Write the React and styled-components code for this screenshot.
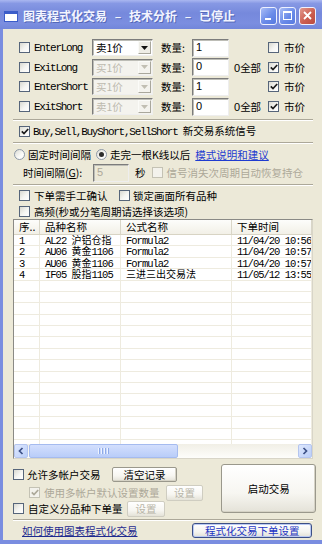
import React from "react";
import styled, { createGlobalStyle } from "styled-components";

const CJK = `"Noto Sans CJK SC", "Noto Sans", sans-serif`;
const MONO = `"Liberation Mono", "DejaVu Sans Mono", monospace`;
const SANS = `"Liberation Sans", Arial, sans-serif`;

const FRAME = "#7a8de0";
const FACE = "#ece9d8";
const DIS = "#aca899";

const Global = createGlobalStyle`
  * { box-sizing: border-box; }
  html, body { margin: 0; padding: 0; width: 322px; height: 544px; overflow: hidden; background: ${FRAME}; }
  #root { width: 322px; height: 544px; }
`;

const Window = styled.div`
  width: 322px;
  height: 544px;
  display: flex;
  flex-direction: column;
  background: ${FRAME};
  font-family: ${CJK};
  font-size: 10.5px;
  color: #000;
`;

const TitleBar = styled.div`
  flex: none;
  height: 29px;
  display: flex;
  align-items: flex-start;
  padding: 0 6px 0 4px;
  background: linear-gradient(to bottom, #aab7f0 0%, #8698e4 12%, #7689dc 45%, #7b8ee0 80%, #7286da 100%);
`;

const WinIcon = styled.svg`
  flex: none;
  margin-top: 11px;
`;

const TitleText = styled.div`
  margin-left: 5px;
  margin-top: 7px;
  font-family: ${CJK};
  font-weight: 700;
  font-size: 12px;
  line-height: 17px;
  color: #f3f5ff;
  white-space: nowrap;
  text-shadow: 1px 1px 0 #5468b8;
`;

const Dash = styled.span`
  display: inline-block;
  width: 22px;
  text-align: center;
`;

const Caption = styled.div`
  margin-left: auto;
  margin-top: 7px;
  display: flex;
  gap: 2px;
`;

const CapBtn = styled.div`
  width: 17px;
  height: 18px;
  margin-left: ${(p) => (p.$close ? "1px" : "0")};
  border: 1px solid #eef1ff;
  border-radius: 3px;
  background: ${(p) =>
    p.$close
      ? "linear-gradient(135deg, #e29a8f, #cc5e50 55%, #b94b3f)"
      : "linear-gradient(135deg, #a9bdf6, #6a8be9 55%, #5679e0)"};
  display: flex;
  align-items: center;
  justify-content: center;
`;

const Frame = styled.div`
  flex: 1;
  display: flex;
  padding: 0 4px 4px 3px;
`;

const Body = styled.div`
  flex: 1;
  background: ${FACE};
  display: flex;
  flex-direction: column;
  padding: 9px 9px 2px 10px;
  & > * {
    flex: none;
  }
`;

const Mono = styled.span`
  font-family: ${MONO};
  font-size: 11px;
  letter-spacing: -1.25px;
`;

const Label = styled.span`
  font-family: ${CJK};
  font-size: 10.5px;
  line-height: 13px;
  white-space: nowrap;
  color: ${(p) => (p.$disabled ? DIS : "#000")};
  margin-left: ${(p) => p.$ml || 0}px;
`;

const LinkText = styled.span`
  font-family: ${CJK};
  font-size: 10.5px;
  line-height: 13px;
  white-space: nowrap;
  color: ${(p) => p.$color || "#1f3bd0"};
  text-decoration: underline;
  margin-left: ${(p) => p.$ml || 0}px;
`;

/* ---------- checkbox / radio ---------- */
const Box = styled.span`
  flex: none;
  width: 11px;
  height: 11px;
  margin-left: ${(p) => p.$ml || 0}px;
  border: 1px solid ${(p) => (p.$disabled ? "#c4c2b4" : "#56657a")};
  background: ${(p) =>
    p.$disabled ? "#f3f2ec" : "linear-gradient(135deg, #d9d9d1 0%, #f6f6f3 55%, #ffffff 100%)"};
  display: inline-flex;
  align-items: center;
  justify-content: center;
`;

function Check({ checked, disabled, ml }) {
  return (
    <Box $disabled={disabled} $ml={ml}>
      {checked && (
        <svg width="8" height="7" viewBox="0 0 8 7">
          <polyline
            points="0.8,3.3 3,5.6 7.2,1"
            fill="none"
            stroke={disabled ? DIS : "#1c1c1c"}
            strokeWidth="1.7"
          />
        </svg>
      )}
    </Box>
  );
}

const RadioBox = styled.span`
  flex: none;
  width: 11px;
  height: 11px;
  border-radius: 50%;
  margin-left: ${(p) => p.$ml || 0}px;
  border: 1px solid #8e99a8;
  background: linear-gradient(135deg, #dcdcd4 0%, #fafaf8 60%, #fff 100%);
  display: inline-flex;
  align-items: center;
  justify-content: center;
  &::after {
    content: "";
    width: 5px;
    height: 5px;
    border-radius: 50%;
    background: ${(p) => (p.$on ? "#2d2d2d" : "transparent")};
  }
`;

/* ---------- inputs ---------- */
const TextBox = styled.div`
  flex: none;
  width: ${(p) => p.$w}px;
  height: 18px;
  border: 1px solid;
  border-color: #7c7c7c #eeeeee #eeeeee #7c7c7c;
  box-shadow: inset 1px 1px 0 #bdbdb6;
  background: ${(p) => (p.$disabled ? FACE : "#fff")};
  font-family: ${SANS};
  font-size: 11px;
  line-height: 13px;
  padding: 1px 0 0 3px;
  color: ${(p) => (p.$disabled ? DIS : "#000")};
`;

const SelectBox = styled.div`
  flex: none;
  width: 61px;
  height: 17px;
  display: flex;
  border: 1px solid;
  border-color: #7c7c7c #eeeeee #eeeeee #7c7c7c;
  box-shadow: inset 1px 1px 0 #bdbdb6;
  background: ${(p) => (p.$disabled ? "#f4f3ee" : "#fff")};
`;

const SelText = styled.span`
  flex: 1;
  padding: 1px 0 0 3px;
  font-family: ${CJK};
  font-size: 10.5px;
  line-height: 13px;
  color: ${(p) => (p.$disabled ? "#bdbaae" : "#000")};
`;

const SelBtn = styled.span`
  width: 13px;
  margin: 1px 1px 1px 0;
  border: 1px solid;
  border-color: #fbfbf8 #a9a79c #a9a79c #fbfbf8;
  background: ${(p) => (p.$disabled ? "#f4f3ee" : "#eeede6")};
  display: flex;
  align-items: center;
  justify-content: center;
`;

function Select({ value, disabled }) {
  return (
    <SelectBox $disabled={disabled}>
      <SelText $disabled={disabled}>{value}</SelText>
      <SelBtn $disabled={disabled}>
        <svg width="7" height="4" viewBox="0 0 7 4">
          <polygon points="0,0 7,0 3.5,4" fill={disabled ? "#c2bfb3" : "#111"} />
        </svg>
      </SelBtn>
    </SelectBox>
  );
}

/* ---------- buttons ---------- */
const Button = styled.div`
  flex: none;
  width: ${(p) => p.$w}px;
  height: ${(p) => p.$h}px;
  margin-left: ${(p) => p.$ml || 0}px;
  display: flex;
  align-items: center;
  justify-content: center;
  border: 1px solid ${(p) => (p.$disabled ? "#cfcdc1" : "#9a988c")};
  border-radius: 2px;
  background: linear-gradient(to bottom, #ffffff 0%, #f7f6f1 60%, #e4e2d8 100%);
  box-shadow: ${(p) => (p.$disabled ? "none" : "inset -1px -1px 0 #d6d3c6")};
  font-family: ${CJK};
  font-size: 10.5px;
  white-space: nowrap;
  color: ${(p) => (p.$disabled ? "#b8b5a8" : "#000")};
`;

const DefaultButton = styled.div`
  flex: none;
  width: 120px;
  height: 15px;
  display: flex;
  align-items: center;
  justify-content: center;
  border: 1px solid #3c4f86;
  border-radius: 3px;
  background: linear-gradient(to bottom, #ffffff 0%, #f4f4f0 60%, #e2e0d6 100%);
  box-shadow: inset 0 0 0 1px #b9c9f3;
  font-family: ${CJK};
  font-size: 10.5px;
  white-space: nowrap;
  color: #1d36c4;
`;

/* ---------- layout rows ---------- */
const OrderRow = styled.div`
  height: 19.6px;
  display: flex;
  align-items: center;
`;

const CheckCell = styled.div`
  flex: none;
  width: 79px;
  padding-left: 6px;
  display: flex;
  align-items: center;
`;

const QtyLabel = styled.span`
  flex: none;
  width: 31px;
  margin-left: 8px;
  font-family: ${CJK};
  font-size: 10.5px;
`;

const AllCell = styled.span`
  flex: none;
  width: 39px;
  padding-left: 5px;
  font-family: ${CJK};
  font-size: 10.5px;
  white-space: nowrap;
`;

const Zero = styled.span`
  font-family: ${SANS};
  font-size: 11px;
`;

const Sep = styled.div`
  height: 2px;
  margin-top: ${(p) => p.$mt || 0}px;
  border-top: 1px solid #aca899;
  border-bottom: 1px solid #ffffff;
`;

const Row = styled.div`
  height: ${(p) => p.$h}px;
  margin-top: ${(p) => p.$mt || 0}px;
  padding-left: ${(p) => p.$pl || 0}px;
  display: flex;
  align-items: center;
`;

const TimeLabel = styled.span`
  flex: none;
  width: 70px;
  font-family: ${CJK};
  font-size: 10.5px;
  white-space: nowrap;
`;

/* ---------- table ---------- */
const COLS = "26px 81px 111px 1fr";

const Table = styled.div`
  height: 240px;
  display: flex;
  flex-direction: column;
  border: 1px solid;
  border-color: #8a8a86 #d8d5c8 #d8d5c8 #8a8a86;
  background: #fff;
  overflow: hidden;
`;

const HeadRow = styled.div`
  flex: none;
  height: 15px;
  display: grid;
  grid-template-columns: ${COLS};
  background: linear-gradient(to bottom, #fdfdfb, #f2f0e7);
  border-bottom: 1px solid #d8d4c4;
`;

const HeadCell = styled.div`
  padding-left: 5px;
  border-right: 1px solid #d9d6c8;
  font-family: ${CJK};
  font-size: 10.5px;
  line-height: 14px;
  white-space: nowrap;
  overflow: hidden;
`;

const Rows = styled.div`
  flex: 1;
  overflow: hidden;
`;

const DataRow = styled.div`
  height: 11.4px;
  display: grid;
  grid-template-columns: ${COLS};
  border-bottom: 1px solid #eeebdf;
`;

const Cell = styled.div`
  padding-left: 5px;
  border-right: 1px solid #eeebdf;
  font-family: ${CJK};
  font-size: 10px;
  line-height: 10.4px;
  white-space: nowrap;
  overflow-x: clip;
  overflow-y: visible;
  & ${Mono} {
    font-size: 10.5px;
    letter-spacing: -1px;
  }
`;

const HScroll = styled.div`
  flex: none;
  height: 14px;
  display: flex;
  background: linear-gradient(to bottom, #f1efe6, #fdfdfb);
`;

const ScrollBtn = styled.div`
  flex: none;
  width: 14px;
  height: 14px;
  border: 1px solid #b4c5ef;
  border-radius: 2px;
  background: linear-gradient(135deg, #dde7fd, #bccff9);
  display: flex;
  align-items: center;
  justify-content: center;
  margin-left: ${(p) => (p.$right ? "auto" : "0")};
`;

const Thumb = styled.div`
  flex: none;
  width: 149px;
  margin-left: 1px;
  border: 1px solid #a5bbef;
  border-radius: 2px;
  background: linear-gradient(to bottom, #d3dffd, #b9cdf9);
  display: flex;
  align-items: center;
  justify-content: center;
  gap: 1px;
`;

const Grip = styled.span`
  width: 1px;
  height: 6px;
  background: #eef3fe;
  box-shadow: 1px 0 0 #8eaae8;
  margin-right: 1px;
`;

/* ---------- bottom ---------- */
const Bottom = styled.div`
  margin-top: 5px;
  margin-right: -3px;
  height: 53px;
  display: flex;
`;

const BottomLeft = styled.div`
  flex: 1;
  display: flex;
  flex-direction: column;
`;

const BigButton = styled(Button)`
  border-radius: 3px;
`;

const FootRow = styled.div`
  margin-top: 2px;
  height: 15px;
  padding: 0 1px 0 9px;
  display: flex;
  align-items: center;
  justify-content: space-between;
`;

function Mixed({ text }) {
  const parts = text.match(/[\x20-\x7e]+|[^\x20-\x7e]+/g) || [];
  return parts.map((s, i) =>
    /^[\x20-\x7e]+$/.test(s) ? <Mono key={i}>{s}</Mono> : <span key={i}>{s}</span>
  );
}

const orders = [
  { name: "EnterLong", price: "卖1价", enabled: true, qty: "1", all: false, market: false },
  { name: "ExitLong", price: "买1价", enabled: false, qty: "0", all: true, market: true },
  { name: "EnterShort", price: "买1价", enabled: false, qty: "1", all: false, market: true },
  { name: "ExitShort", price: "卖1价", enabled: false, qty: "0", all: true, market: true },
];

const records = [
  ["1", "AL22 沪铝仓指", "Formula2", "11/04/20 10:56"],
  ["2", "AU06 黄金1106", "Formula2", "11/04/20 10:57"],
  ["3", "AU06 黄金1106", "Formula2", "11/04/20 10:57"],
  ["4", "IF05 股指1105", "三进三出交易法", "11/05/12 13:55"],
];

export default function App() {
  const empty = Array.from({ length: 16 });
  return (
    <>
      <Global />
      <Window>
        <TitleBar>
          <WinIcon width="14" height="11" viewBox="0 0 14 11">
            <rect x="0.5" y="0.5" width="13" height="10" fill="#fff" stroke="#3b5cc9" />
            <rect x="0" y="0" width="14" height="3" fill="#3b5cc9" />
          </WinIcon>
          <TitleText>
            图表程式化交易<Dash>–</Dash>技术分析<Dash>–</Dash>已停止
          </TitleText>
          <Caption>
            <CapBtn>
              <svg width="15" height="16" viewBox="0 0 15 16">
                <rect x="4" y="10" width="6" height="2" fill="#fff" />
              </svg>
            </CapBtn>
            <CapBtn>
              <svg width="15" height="16" viewBox="0 0 15 16">
                <rect x="3.5" y="3.5" width="8" height="8" fill="none" stroke="#fff" />
                <rect x="3" y="3" width="9" height="2" fill="#fff" />
              </svg>
            </CapBtn>
            <CapBtn $close>
              <svg width="15" height="16" viewBox="0 0 15 16">
                <path d="M4 4 L11 11 M11 4 L4 11" stroke="#fff" strokeWidth="1.8" />
              </svg>
            </CapBtn>
          </Caption>
        </TitleBar>
        <Frame>
          <Body>
            {orders.map((o) => (
              <OrderRow key={o.name}>
                <CheckCell>
                  <Check />
                  <Label $ml={4}>
                    <Mono>{o.name}</Mono>
                  </Label>
                </CheckCell>
                <Select value={o.price} disabled={!o.enabled} />
                <QtyLabel>数量:</QtyLabel>
                <TextBox $w={37}>{o.qty}</TextBox>
                <AllCell>
                  {o.all && (
                    <>
                      <Zero>0</Zero>全部
                    </>
                  )}
                </AllCell>
                <Check checked={o.market} />
                <Label $ml={5}>市价</Label>
              </OrderRow>
            ))}

            <Sep $mt={2.6} />
            <Row $h={21} $pl={6}>
              <Check checked />
              <Label $ml={3}>
                <Mono>Buy,Sell,BuyShort,SellShort </Mono>新交易系统信号
              </Label>
            </Row>
            <Sep />

            <Row $h={18} $mt={2} $pl={1}>
              <RadioBox />
              <Label $ml={3}>固定时间间隔</Label>
              <RadioBox $on $ml={5} />
              <Label $ml={3}>走完一根K线以后</Label>
              <LinkText $ml={5}>模式说明和建议</LinkText>
            </Row>
            <Row $h={18} $pl={10}>
              <TimeLabel>
                时间间隔(<u>G</u>):
              </TimeLabel>
              <TextBox $w={36} $disabled>
                5
              </TextBox>
              <Label $ml={6}>秒</Label>
              <Check disabled ml={6} />
              <Label $ml={4} $disabled>
                信号消失次周期自动恢复持仓
              </Label>
            </Row>
            <Sep $mt={2} />

            <Row $h={16} $mt={2} $pl={6}>
              <Check />
              <Label $ml={4}>下单需手工确认</Label>
              <Check ml={11.5} />
              <Label $ml={3}>锁定画面所有品种</Label>
            </Row>
            <Row $h={15} $pl={6}>
              <Check />
              <Label $ml={4}>高频(秒或分笔周期请选择该选项)</Label>
            </Row>

            <Table>
              <HeadRow>
                <HeadCell>序..</HeadCell>
                <HeadCell>品种名称</HeadCell>
                <HeadCell>公式名称</HeadCell>
                <HeadCell>下单时间</HeadCell>
              </HeadRow>
              <Rows>
                {records.map((r) => (
                  <DataRow key={r[0]}>
                    {r.map((c, i) => (
                      <Cell key={i}>
                        <Mixed text={c} />
                      </Cell>
                    ))}
                  </DataRow>
                ))}
                {empty.map((_, i) => (
                  <DataRow key={"e" + i}>
                    <Cell />
                    <Cell />
                    <Cell />
                    <Cell />
                  </DataRow>
                ))}
              </Rows>
              <HScroll>
                <ScrollBtn>
                  <svg width="8" height="8" viewBox="0 0 8 8">
                    <polyline points="5.5,1 2.5,4 5.5,7" fill="none" stroke="#3d5187" strokeWidth="1.7" />
                  </svg>
                </ScrollBtn>
                <Thumb>
                  <Grip />
                  <Grip />
                  <Grip />
                  <Grip />
                </Thumb>
                <ScrollBtn $right>
                  <svg width="8" height="8" viewBox="0 0 8 8">
                    <polyline points="2.5,1 5.5,4 2.5,7" fill="none" stroke="#3d5187" strokeWidth="1.7" />
                  </svg>
                </ScrollBtn>
              </HScroll>
            </Table>

            <Bottom>
              <BottomLeft>
                <Row $h={19} $mt={1}>
                  <Check />
                  <Label $ml={3}>允许多帐户交易</Label>
                  <Button $w={65} $h={15} $ml={11.5}>
                    清空记录
                  </Button>
                </Row>
                <Row $h={18} $pl={16}>
                  <Check checked disabled />
                  <Label $ml={4} $disabled>
                    使用多帐户默认设置数量
                  </Label>
                  <Button $w={37} $h={16} $ml={6.5} $disabled>
                    设置
                  </Button>
                </Row>
                <Row $h={14}>
                  <Check />
                  <Label $ml={4}>自定义分品种下单量</Label>
                  <Button $w={38} $h={16} $ml={4.5} $disabled>
                    设置
                  </Button>
                </Row>
              </BottomLeft>
              <BigButton $w={95} $h={49}>
                启动交易
              </BigButton>
            </Bottom>
            <Sep $mt={2} />
            <FootRow>
              <LinkText $color="#1e2b8f">如何使用图表程式化交易</LinkText>
              <DefaultButton>程式化交易下单设置</DefaultButton>
            </FootRow>
          </Body>
        </Frame>
      </Window>
    </>
  );
}
